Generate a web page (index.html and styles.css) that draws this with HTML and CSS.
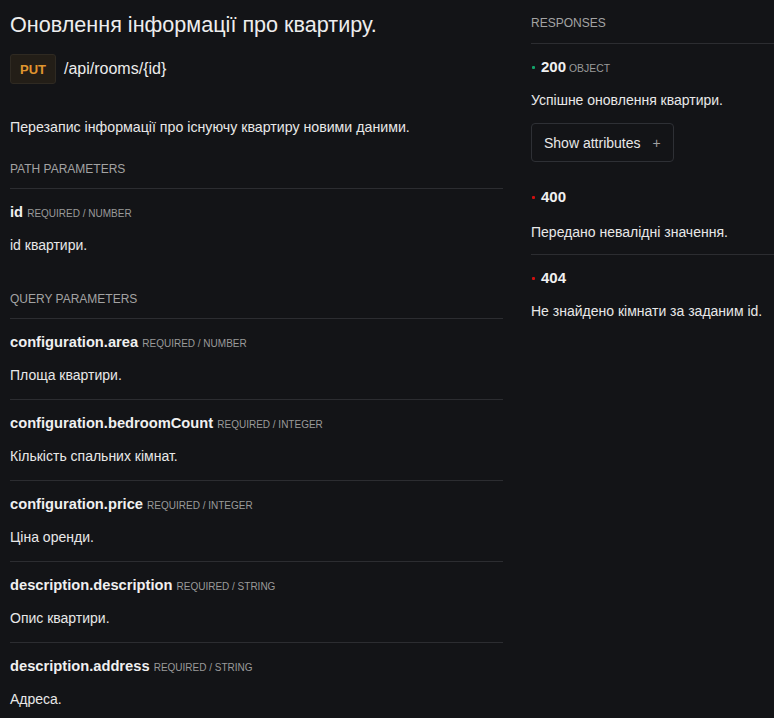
FILE: index.html
```html
<!DOCTYPE html>
<html lang="uk">
<head>
<meta charset="utf-8">
<title>PUT /api/rooms/{id}</title>
<link rel="stylesheet" href="styles.css">
</head>
<body>
<div class="page">
  <main class="main">
    <h1 class="title">Оновлення інформації про квартиру.</h1>
    <div class="endpoint">
      <span class="method">PUT</span>
      <span class="path">/api/rooms/{id}</span>
    </div>
    <p class="summary">Перезапис інформації про існуючу квартиру новими даними.</p>

    <section class="params">
      <h2 class="section-label">Path parameters</h2>
      <div class="param">
        <div class="param-head"><span class="param-name">id</span> <span class="param-meta">required / number</span></div>
        <div class="param-desc">id квартири.</div>
      </div>
    </section>

    <section class="params query">
      <h2 class="section-label">Query parameters</h2>
      <div class="param">
        <div class="param-head"><span class="param-name">configuration.area</span> <span class="param-meta">required / number</span></div>
        <div class="param-desc">Площа квартири.</div>
      </div>
      <div class="param">
        <div class="param-head"><span class="param-name">configuration.bedroomCount</span> <span class="param-meta">required / integer</span></div>
        <div class="param-desc">Кількість спальних кімнат.</div>
      </div>
      <div class="param">
        <div class="param-head"><span class="param-name">configuration.price</span> <span class="param-meta">required / integer</span></div>
        <div class="param-desc">Ціна оренди.</div>
      </div>
      <div class="param">
        <div class="param-head"><span class="param-name">description.description</span> <span class="param-meta">required / string</span></div>
        <div class="param-desc">Опис квартири.</div>
      </div>
      <div class="param">
        <div class="param-head"><span class="param-name">description.address</span> <span class="param-meta">required / string</span></div>
        <div class="param-desc">Адреса.</div>
      </div>
    </section>
  </main>

  <aside class="responses">
    <h2 class="section-label">Responses</h2>
    <div class="response r200">
      <div class="resp-head"><span class="dot dot-ok"></span><span class="code">200</span> <span class="resp-type">object</span></div>
      <div class="resp-desc">Успішне оновлення квартири.</div>
      <button class="attr-btn" type="button">Show attributes <span class="plus">+</span></button>
    </div>
    <div class="response r400">
      <div class="resp-head"><span class="dot dot-err"></span><span class="code">400</span></div>
      <div class="resp-desc">Передано невалідні значення.</div>
    </div>
    <div class="response r404">
      <div class="resp-head"><span class="dot dot-err"></span><span class="code">404</span></div>
      <div class="resp-desc">Не знайдено кімнати за заданим id.</div>
    </div>
  </aside>
</div>
</body>
</html>
```

FILE: styles.css
```css
html, body {
  margin: 0;
  padding: 0;
  background: #131417;
}

body {
  font-family: "Liberation Sans", Arial, sans-serif;
  color: #e8e8e8;
  width: 774px;
  height: 718px;
  overflow: hidden;
}

.page {
  display: grid;
  grid-template-columns: 493px 1fr;
  column-gap: 28px;
  padding-left: 10px;
}

.title {
  margin: 11px 0 0;
  font-size: 21.6px;
  line-height: 28px;
  font-weight: normal;
  color: #ededed;
}

.endpoint {
  display: flex;
  align-items: center;
  gap: 8px;
  margin-top: 15px;
  height: 30px;
}

.method {
  box-sizing: border-box;
  height: 30px;
  display: flex;
  align-items: center;
  padding: 0 9px;
  border: 1px solid #2f2a22;
  border-radius: 3px;
  background: #231e17;
  color: #e0952f;
  font-size: 13px;
  font-weight: bold;
}

.path {
  font-size: 16px;
  color: #ececec;
}

.summary {
  margin: 33px 0 0;
  font-size: 14.2px;
  line-height: 20px;
}

.section-label {
  margin: 0;
  font-size: 12px;
  line-height: 16px;
  font-weight: normal;
  text-transform: uppercase;
  color: #a3a3a3;
  padding-bottom: 11px;
  border-bottom: 1px solid #2c2d31;
}

.params {
  margin-top: 24px;
}

.params.query {
  margin-top: 22px;
}

.param {
  padding: 13px 0 14px;
  display: flex;
  flex-direction: column;
  gap: 13px;
}

.param + .param {
  border-top: 1px solid #2c2d31;
}

.param-head {
  height: 20px;
  line-height: 20px;
  font-size: 14.7px;
  white-space: nowrap;
}

.param-name {
  font-weight: bold;
  color: #f0f0f0;
}

.param-meta {
  font-size: 10px;
  line-height: 10px;
  text-transform: uppercase;
  color: #9a9a9a;
}

.param-desc {
  font-size: 14px;
  line-height: 20px;
}

.responses {
  padding-top: 15px;
}

.responses .section-label {
  padding-bottom: 12px;
}

.response {
  display: flex;
  flex-direction: column;
  align-items: flex-start;
  gap: 13px;
}

.r200 {
  padding-top: 13px;
}

.r400 {
  padding-top: 25px;
  padding-bottom: 12px;
  gap: 15px;
  border-bottom: 1px solid #2c2d31;
}

.r404 {
  padding-top: 13px;
}

.resp-head {
  display: flex;
  align-items: baseline;
  height: 20px;
  line-height: 20px;
}

.dot {
  align-self: center;
  width: 3px;
  height: 3px;
  margin: 1px 6px 0 1px;
  border-radius: 1px;
}

.dot-ok {
  background: #12a36a;
}

.dot-err {
  background: #d00f0f;
}

.code {
  font-size: 15px;
  font-weight: bold;
  color: #f0f0f0;
}

.resp-type {
  margin-left: 3px;
  font-size: 10.4px;
  text-transform: uppercase;
  color: #9a9a9a;
}

.resp-desc {
  font-size: 14px;
  line-height: 20px;
}

.attr-btn {
  box-sizing: border-box;
  height: 39px;
  display: flex;
  align-items: center;
  gap: 12px;
  padding: 0 12px;
  background: #131417;
  border: 1px solid #2e3035;
  border-radius: 4px;
  color: #e8e8e8;
  font-family: "Liberation Sans", Arial, sans-serif;
  font-size: 14px;
}

.plus {
  color: #a0a0a0;
  font-size: 14px;
}
```
